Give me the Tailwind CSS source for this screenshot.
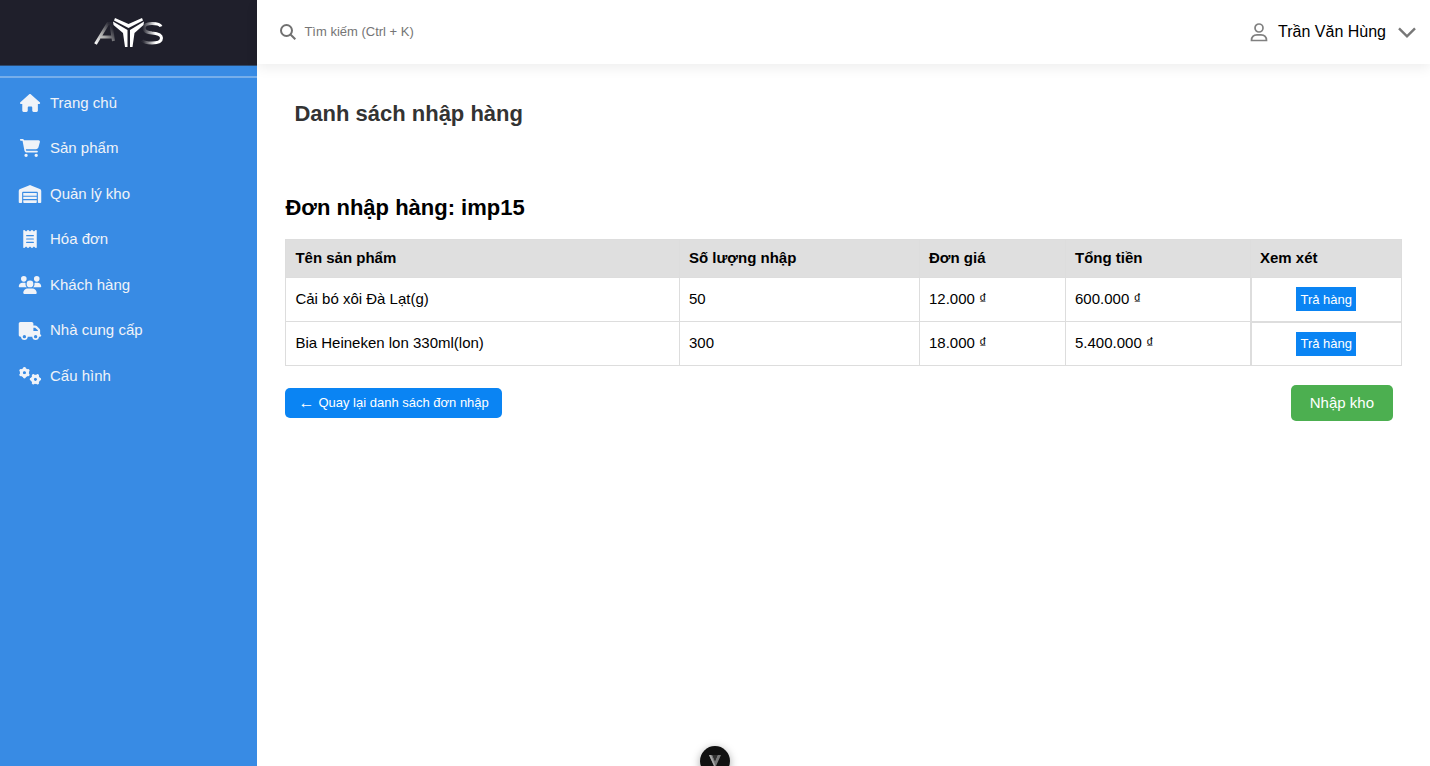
<!DOCTYPE html>
<html lang="vi">
<head>
<meta charset="utf-8">
<meta name="viewport" content="width=device-width, initial-scale=1">
<title>Danh sách nhập hàng</title>
<script src="https://cdn.jsdelivr.net/npm/@tailwindcss/browser@4"></script>
</head>
<body class="flex min-h-screen bg-white font-['Liberation_Sans',Arial,sans-serif] text-[15px] text-black">
<aside class="w-[18%] shrink-0 bg-[#388be4] text-[#f0f3f8]">
  <a href="#" aria-label="AYS" class="flex h-[66px] items-center justify-center border-b border-[#2c4a70] bg-[#1f1f2b]">
    <svg class="h-8 w-[70px]" viewBox="0 0 70 32" fill="none">
      <defs>
        <linearGradient id="fadeA" x1="0" y1="26" x2="19" y2="12" gradientUnits="userSpaceOnUse"><stop stop-color="#fff"/><stop offset=".5" stop-color="#aaa"/><stop offset="1" stop-color="#2a2a35"/></linearGradient>
        <linearGradient id="fadeS" x1="49" y1="0" x2="67" y2="0" gradientUnits="userSpaceOnUse"><stop stop-color="#2a2a35"/><stop offset=".7" stop-color="#fff"/></linearGradient>
      </defs>
      <path d="M1.500 27L14 6.500L17 6.500L19.500 24M7 20H18" stroke="url(#fadeA)" stroke-width="3"/>
      <path d="M67 9.500C66 7 63 6.500 58 6.500C53 6.500 50 7.500 50 11C50 15 54 15.500 58 16C64 16.500 67.500 17.500 67.500 21C67.500 25 63 26 58 26C53 26 50 25.500 48 23.500" stroke="url(#fadeS)" stroke-width="3"/>
      <path d="M21 1L34.500 7L48 1L49 3.500L34.500 11L20 3.500Z" fill="#fff"/>
      <path d="M19 4.500L33.500 13V30H31L29 16L19.500 8Z" fill="#fff"/>
      <path d="M50 4.500L36 13V30H38.500L40.500 16L49.500 8Z" fill="#fff"/>
    </svg>
  </a>
  <hr class="mt-2.5 border-t-2 border-[#76aeea]">
  <nav class="mt-0.5 grid h-[319px] grid-rows-7">
    <a href="#" class="flex items-center gap-2 pl-[18px]"><svg class="h-[18px] w-6" viewBox="0 0 576 512" fill="currentColor"><path d="M575.8 255.5c0 18-15 32.1-32 32.1l-32 0 .7 160.2c0 2.700-.2 5.400-.5 8.100l0 16.200c0 22.100-17.900 40-40 40l-56 0-24 0c-22.100 0-40-17.900-40-40l0-24 0-64c0-17.700-14.300-32-32-32l-64 0c-17.700 0-32 14.300-32 32l0 64 0 24c0 22.100-17.900 40-40 40l-76 0c-22.100 0-40-17.900-40-40l0-112 0-72.500-32 0c-18 0-32-14-32-32.100c0-9 3-17 10-24L266.400 8c7-7 15-8 22-8s15 2 21 7L564.800 231.500c8 7 12 15 11 24z"/></svg>Trang chủ</a>
    <a href="#" class="flex items-center gap-2 pl-[18px]"><svg class="h-[18px] w-6" viewBox="0 0 576 512" fill="currentColor"><path d="M0 24C0 10.7 10.7 0 24 0L69.500 0c22 0 41.500 12.800 50.600 32l411 0c26.300 0 45.500 25 38.600 50.400l-41 152.300c-8.500 31.400-37 53.300-69.500 53.300l-288.500 0 5.400 28.500c2.200 11.300 12.100 19.500 23.600 19.500L488 336c13.300 0 24 10.700 24 24s-10.700 24-24 24l-288.300 0c-34.600 0-64.300-24.600-70.700-58.500L77.400 54.500c-.7-3.800-4-6.500-7.900-6.500L24 48C10.700 48 0 37.300 0 24zM128 464a48 48 0 1 1 96 0 48 48 0 1 1 -96 0zm336-48a48 48 0 1 1 0 96 48 48 0 1 1 0-96z"/></svg>Sản phẩm</a>
    <a href="#" class="flex items-center gap-2 pl-[18px]"><svg class="h-[18px] w-6" viewBox="0 0 640 512" fill="currentColor"><path d="M0 488L0 171.300c0-26.200 15.900-49.700 40.200-59.400L308.100 4.800c7.600-3.100 16.100-3.100 23.800 0L599.800 111.900c24.300 9.700 40.200 33.300 40.200 59.400L640 488c0 13.300-10.700 24-24 24l-48 0c-13.300 0-24-10.700-24-24l0-264c0-17.700-14.300-32-32-32l-384 0c-17.700 0-32 14.300-32 32l0 264c0 13.300-10.700 24-24 24l-48 0c-13.300 0-24-10.700-24-24zm488 24l-336 0c-13.300 0-24-10.700-24-24l0-56 384 0 0 56c0 13.300-10.700 24-24 24zM128 400l0-64 384 0 0 64-384 0zm0-96l0-80 384 0 0 80-384 0z"/></svg>Quản lý kho</a>
    <a href="#" class="flex items-center gap-2 pl-[18px]"><svg class="h-[18px] w-6" viewBox="0 0 384 512" fill="currentColor"><path d="M14 2.200C22.500-1.700 32.500-.3 39.600 5.800L80 40.400 120.400 5.800c9-7.700 22.300-7.700 31.200 0L192 40.400 232.400 5.800c9-7.700 22.300-7.700 31.200 0L304 40.400 344.400 5.800c7.100-6.100 17.100-7.500 25.600-3.600s14 12.400 14 21.800l0 464c0 9.400-5.500 17.900-14 21.800s-18.500 2.500-25.600-3.600L304 471.600l-40.400 34.600c-9 7.700-22.300 7.700-31.200 0L192 471.600l-40.400 34.600c-9 7.700-22.300 7.700-31.200 0L80 471.600 39.600 506.200c-7.100 6.100-17.100 7.500-25.600 3.600S0 497.400 0 488L0 24C0 14.600 5.500 6.100 14 2.200zM96 144c-8.800 0-16 7.200-16 16s7.200 16 16 16l192 0c8.800 0 16-7.200 16-16s-7.200-16-16-16L96 144zM80 352c0 8.800 7.200 16 16 16l192 0c8.800 0 16-7.200 16-16s-7.200-16-16-16L96 336c-8.800 0-16 7.200-16 16zM96 240c-8.800 0-16 7.200-16 16s7.200 16 16 16l192 0c8.800 0 16-7.200 16-16s-7.200-16-16-16L96 240z"/></svg>Hóa đơn</a>
    <a href="#" class="flex items-center gap-2 pl-[18px]"><svg class="h-[18px] w-6" viewBox="0 0 640 512" fill="currentColor"><path d="M144 0a80 80 0 1 1 0 160A80 80 0 1 1 144 0zM512 0a80 80 0 1 1 0 160A80 80 0 1 1 512 0zM0 298.700C0 239.800 47.800 192 106.700 192l42.700 0c15.900 0 31 3.500 44.600 9.700c-1.300 7.200-1.900 14.700-1.900 22.300c0 38.200 16.800 72.500 43.300 96L21.300 320C9.600 320 0 310.400 0 298.700zM405.300 320c26.600-23.500 43.300-57.800 43.300-96c0-7.600-.7-15-1.900-22.300c13.600-6.300 28.700-9.700 44.600-9.700l42.700 0C592.200 192 640 239.800 640 298.700c0 11.800-9.600 21.300-21.300 21.300l-213.300 0zM224 224a96 96 0 1 1 192 0 96 96 0 1 1 -192 0zM128 485.300C128 411.700 187.700 352 261.300 352l117.300 0C452.300 352 512 411.700 512 485.300c0 14.700-11.900 26.700-26.700 26.700l-330.700 0c-14.700 0-26.700-11.900-26.700-26.700z"/></svg>Khách hàng</a>
    <a href="#" class="flex items-center gap-2 pl-[18px]"><svg class="h-[18px] w-6" viewBox="0 0 640 512" fill="currentColor"><path d="M48 0C21.500 0 0 21.500 0 48L0 368c0 26.500 21.500 48 48 48l16 0c0 53 43 96 96 96s96-43 96-96l128 0c0 53 43 96 96 96s96-43 96-96l32 0c17.700 0 32-14.300 32-32s-14.300-32-32-32l0-64 0-32 0-18.700c0-17-6.700-33.300-18.700-45.300L512 114.700c-12-12-28.300-18.700-45.300-18.700L416 96l0-48c0-26.500-21.500-48-48-48L48 0zM416 160l50.700 0L544 237.300l0 18.700-128 0 0-96zM112 416a48 48 0 1 1 96 0 48 48 0 1 1 -96 0zm368-48a48 48 0 1 1 0 96 48 48 0 1 1 0-96z"/></svg>Nhà cung cấp</a>
    <a href="#" class="flex items-center gap-2 pl-[18px]"><svg class="h-[18px] w-6" viewBox="0 0 640 512" fill="none" stroke="currentColor" stroke-linecap="round">
      <g stroke-width="84"><circle cx="162" cy="162" r="88"/><path d="M162 76V42M162 248v34M87 119L58 102M237 205l29 17M87 205l-29 17M237 119l29-17"/></g>
      <g stroke-width="84"><circle cx="474" cy="350" r="88"/><path d="M388 350H354M560 350h34M431 275L414 246M517 425l17 29M431 425l-17 29M517 275l17-29"/></g></svg>Cấu hình</a>
  </nav>
</aside>
<div class="min-w-0 flex-1">
  <header class="flex h-16 items-center justify-between pr-[14px] pl-[23px] shadow-[0_4px_12px_rgba(0,0,0,0.07)]">
    <label class="flex items-center gap-2">
      <svg class="size-4" viewBox="0 0 16 16" fill="none" stroke="#717171" stroke-width="2" aria-hidden="true"><circle cx="6.500" cy="6.500" r="5.500"/><path d="M10.500 10.500L15.300 15.300"/></svg>
      <input type="text" aria-label="Tìm kiếm" placeholder="Tìm kiếm (Ctrl + K)" class="w-60 text-[13px] outline-none placeholder:text-[#757575]">
    </label>
    <button class="flex items-center text-base">
      <svg class="mr-2.5 h-[19px] w-[18px]" viewBox="0 0 18 19" fill="none" stroke="#808080" stroke-width="1.700" aria-hidden="true"><circle cx="9" cy="5" r="4"/><path d="M1.500 17.500C1.500 13.500 4 11.800 7 11.800H11C14 11.800 16.500 13.500 16.500 17.500Z"/></svg>
      <span>Trần Văn Hùng</span>
      <svg class="ml-3 h-[11px] w-[18px]" viewBox="0 0 18 11" fill="none" stroke="#777" stroke-width="2.400" aria-hidden="true"><path d="M1 1.300L9 9.300L17 1.300"/></svg>
    </button>
  </header>
  <main class="pr-7 pl-[28px]">
    <h1 class="mt-9 ml-[9px] text-[22px] leading-7 font-bold text-[#333]">Danh sách nhập hàng</h1>
    <h2 class="mt-[66px] text-[22px] leading-7 font-bold">Đơn nhập hàng: imp15</h2>
    <table class="mt-[17px] w-full table-fixed border-collapse text-left">
      <colgroup><col><col class="w-[240px]"><col class="w-[146px]"><col class="w-[185px]"><col class="w-[151px]"></colgroup>
      <thead><tr class="h-[38px] bg-[#dfdfdf]">
        <th class="border border-[#ddd] px-[9px]">Tên sản phẩm</th><th class="border border-[#ddd] px-[9px]">Số lượng nhập</th><th class="border border-[#ddd] px-[9px]">Đơn giá</th><th class="border border-[#ddd] px-[9px]">Tổng tiền</th><th class="border border-[#ddd] px-[9px]">Xem xét</th>
      </tr></thead>
      <tbody>
        <tr class="h-11"><td class="border border-[#ddd] px-[9px]">Cải bó xôi Đà Lạt(g)</td><td class="border border-[#ddd] px-[9px]">50</td><td class="border border-[#ddd] px-[9px]">12.000 ₫</td><td class="border border-[#ddd] px-[9px]">600.000 ₫</td><td class="border border-l-2 border-[#ddd] text-center"><button class="h-6 bg-[#0a84f3] px-1 align-middle text-[13px] text-white">Trả hàng</button></td></tr>
        <tr class="h-11"><td class="border border-[#ddd] px-[9px]">Bia Heineken lon 330ml(lon)</td><td class="border border-[#ddd] px-[9px]">300</td><td class="border border-[#ddd] px-[9px]">18.000 ₫</td><td class="border border-[#ddd] px-[9px]">5.400.000 ₫</td><td class="border border-t-2 border-l-2 border-[#ddd] text-center"><button class="h-6 bg-[#0a84f3] px-1 align-middle text-[13px] text-white">Trả hàng</button></td></tr>
      </tbody>
    </table>
    <div class="mt-[19px] flex items-center justify-between pr-[9px]">
      <button class="flex h-[30px] items-center gap-1 rounded-[5px] bg-[#0a84f3] px-[13px] text-[13px] text-white"><span class="text-base leading-none">←</span>Quay lại danh sách đơn nhập</button>
      <button class="h-9 rounded-[5px] bg-[#4caf50] px-[19px] text-white">Nhập kho</button>
    </div>
  </main>
</div>
<button aria-label="Mở công cụ" class="fixed -bottom-2.5 left-1/2 flex size-[30px] -translate-x-1/2 items-start justify-center rounded-full bg-[#111] pt-[9px] shadow-[0_2px_8px_rgba(0,0,0,0.35)]">
  <svg class="h-[11px] w-3" viewBox="0 0 12 11"><path d="M0 0H3.500L6 6L8.500 0H12L7 11H5Z" fill="#777"/><path d="M3.500 0H8.500L6 6Z" fill="#333"/><path d="M0 0H2L6 9.500V11H5Z" fill="#aaa"/></svg>
</button>
</body>
</html>
